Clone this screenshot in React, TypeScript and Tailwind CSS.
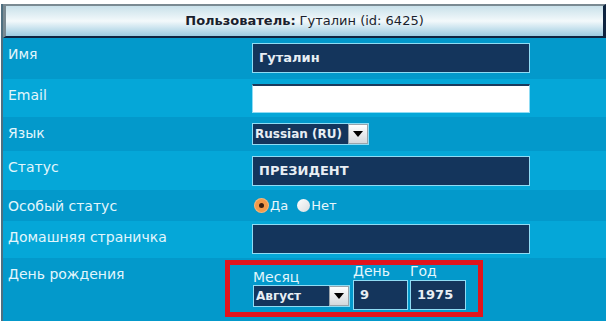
import React from 'react';

const font = { fontFamily: '"DejaVu Sans", Verdana, sans-serif' };

type RowProps = {
    label: string;
    dark: boolean;
    h: string;
    children?: React.ReactNode;
};

const Row: React.FC<RowProps> = ({ label, dark, h, children }) => (
    <div className={`flex ${h} ${dark ? 'bg-[#0399cb]' : 'bg-[#05a7d8]'}`}>
        <div className="w-[247px] shrink-0 pl-[5px] pt-[7px] text-[14px] leading-[18px] text-[#e2f6fc]">
            {label}
        </div>
        <div className="flex-1 pl-[2px]">{children}</div>
    </div>
);

const TextBox: React.FC<{ value?: string; white?: boolean; className?: string }> = ({ value, white, className }) => (
    <div
        className={`flex items-center border border-[#8fdcf4] pl-[6px] text-[13px] font-bold text-[#e8eef4] ${
            white ? 'bg-white border-t-2 border-t-[#1b3a5c]' : 'bg-[#14355c]'
        } ${className ?? ''}`}
    >
        {value}
    </div>
);

const DropBtn = () => (
    <div className="flex h-full w-[20px] shrink-0 items-center justify-center border border-[#9aa4ab] bg-gradient-to-b from-white to-[#d4d8dc]">
        <div className="h-0 w-0 border-x-[5px] border-t-[6px] border-x-transparent border-t-black" />
    </div>
);

const Select: React.FC<{ value: string; className: string }> = ({ value, className }) => (
    <div className={`flex items-stretch border border-[#8fdcf4] bg-[#14355c] ${className}`}>
        <div className="flex flex-1 items-center overflow-hidden whitespace-nowrap pl-[2px] text-[12px] font-bold text-[#e8eef4]">
            {value}
        </div>
        <DropBtn />
    </div>
);

export default function App() {
    return (
        <div className="h-[321px] w-[610px] overflow-hidden bg-white pl-[1px] pt-[4px]" style={font}>
            <div className="w-[605px] border-l-2 border-[#4e6f80]">
                <div className="flex h-[34px] items-center justify-center border-t-2 border-l-[3px] border-r-[3px] border-b-2 border-t-[#7a8a92] border-l-[#7a8a92] border-r-[#0f2440] border-b-[#0f2440] bg-gradient-to-b from-[#c9e1ea] via-[#f3f9fb] to-[#9ccbe0] text-[13px] text-[#1a1f2e]">
                    <span className="font-bold">Пользователь:</span>
                    <span className="ml-[4px]">Гуталин (id: 6425)</span>
                </div>

                <Row label="Имя" dark h="h-[41px]">
                    <TextBox value="Гуталин" className="mt-[5px] h-[30px] w-[278px]" />
                </Row>
                <Row label="Email" dark={false} h="h-[38px]">
                    <TextBox white className="mt-[5px] h-[29px] w-[278px]" />
                </Row>
                <Row label="Язык" dark h="h-[34px]">
                    <Select value="Russian (RU)" className="mt-[6px] h-[22px] w-[117px]" />
                </Row>
                <Row label="Статус" dark={false} h="h-[39px]">
                    <TextBox value="ПРЕЗИДЕНТ" className="mt-[5px] h-[30px] w-[278px]" />
                </Row>
                <Row label="Особый статус" dark h="h-[31px]">
                    <div className="flex h-full items-center pl-[3px] text-[13px] text-[#e8f6fb]">
                        <span className="flex h-[13px] w-[13px] items-center justify-center rounded-full bg-[#f29a4a] shadow-[0_0_0_1px_#f7b77a]">
                            <span className="h-[5px] w-[5px] rounded-full bg-[#3a1e10]" />
                        </span>
                        <span className="ml-[2px]">Да</span>
                        <span className="ml-[9px] h-[13px] w-[13px] rounded-full bg-gradient-to-br from-white to-[#d9dde0]" />
                        <span className="ml-[1px]">Нет</span>
                    </div>
                </Row>
                <Row label="Домашняя страничка" dark={false} h="h-[37px]">
                    <TextBox className="mt-[3px] h-[30px] w-[278px]" />
                </Row>
                <div className="flex h-[70px] bg-[#0399cb]">
                    <div className="w-[220px] shrink-0 pl-[5px] pt-[7px] text-[14px] leading-[18px] text-[#e2f6fc]">
                        День рождения
                    </div>
                    <div className="ml-[2px] mt-[2px] flex h-[57px] w-[258px] items-end border-[5px] border-[#e2141c] pb-[2px] pl-[23px]">
                        <div className="flex flex-col">
                            <span className="text-[14px] leading-[16px] text-[#e2f6fc]">Месяц</span>
                            <Select value="Август" className="mb-[3px] h-[22px] w-[97px]" />
                        </div>
                        <div className="ml-[3px] flex flex-col">
                            <span className="text-[14px] leading-[18px] text-[#e2f6fc]">День</span>
                            <TextBox value="9" className="h-[30px] w-[55px]" />
                        </div>
                        <div className="ml-[2px] flex flex-col">
                            <span className="text-[14px] leading-[18px] text-[#e2f6fc]">Год</span>
                            <TextBox value="1975" className="h-[30px] w-[56px]" />
                        </div>
                    </div>
                </div>
            </div>
        </div>
    );
}
